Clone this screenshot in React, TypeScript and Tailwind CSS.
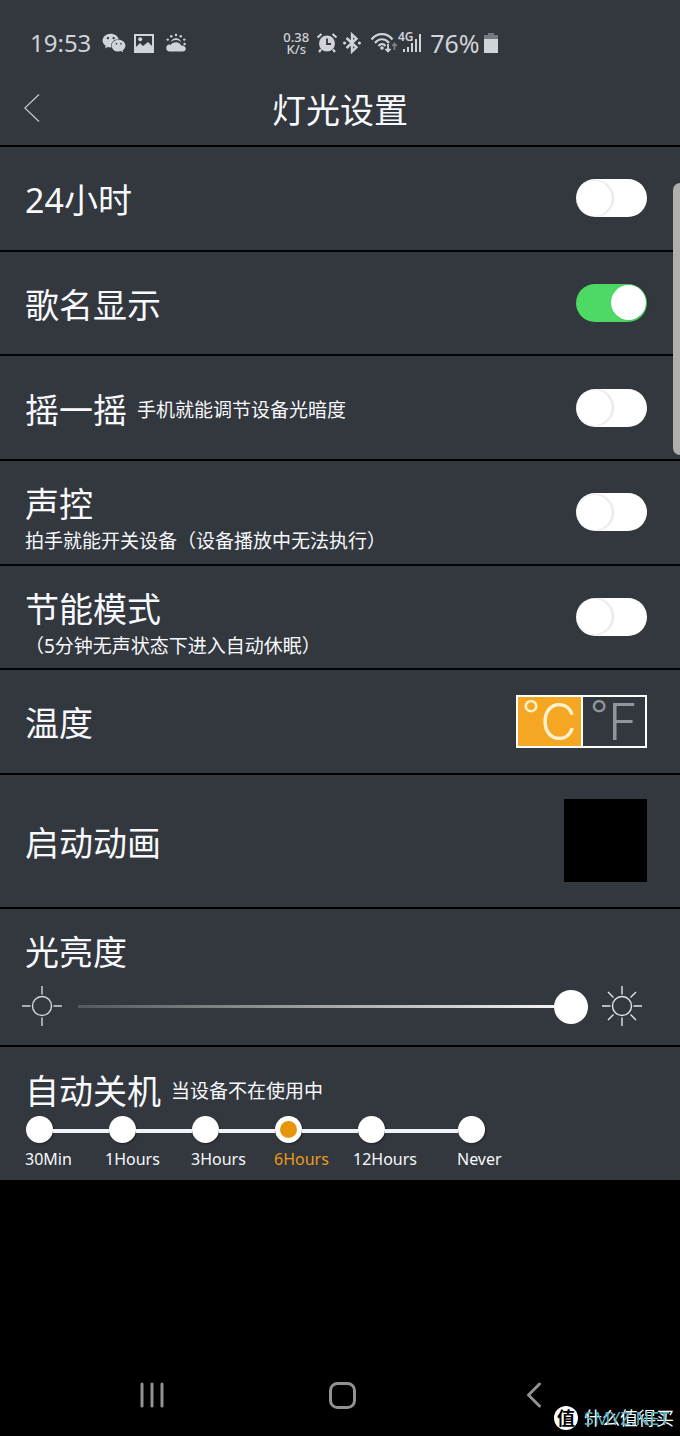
import { useState, type ReactNode } from 'react';
import { FaWeixin } from 'react-icons/fa';

interface ToggleRowProps {
  id: string;
  title: string;
  note?: string;
  stacked?: boolean;
  defaultChecked?: boolean;
}

const toggles: ToggleRowProps[] = [
  { id: 'hour24', title: '24小时' },
  { id: 'songName', title: '歌名显示', defaultChecked: true },
  { id: 'shake', title: '摇一摇', note: '手机就能调节设备光暗度' },
  { id: 'voice', title: '声控', note: '拍手就能开关设备（设备播放中无法执行）', stacked: true },
  { id: 'saving', title: '节能模式', note: '（5分钟无声状态下进入自动休眠）', stacked: true },
];

const timers = [
  { id: '30min', label: '30Min', dotWidth: 'w-[83px]', labelWidth: 'w-[80px]' },
  { id: '1h', label: '1Hours', dotWidth: 'w-[83px]', labelWidth: 'w-[86px]' },
  { id: '3h', label: '3Hours', dotWidth: 'w-[83px]', labelWidth: 'w-[83px]' },
  { id: '6h', label: '6Hours', dotWidth: 'w-[83px]', labelWidth: 'w-[79px]' },
  { id: '12h', label: '12Hours', dotWidth: 'w-[100px]', labelWidth: 'w-[104px]' },
  { id: 'never', label: 'Never', dotWidth: 'w-[27px]', labelWidth: 'w-[46px]' },
];

function StatusBar() {
  return (
    <div className="flex h-[86px] items-center pl-[30px] text-2xl leading-6 text-[#d0d3d8]">
      <span>19:53</span>
      <FaWeixin className="ml-[11px] h-[22px] w-6" />
      <svg viewBox="0 0 20 19" className="ml-2 h-[19px] w-5" fill="currentColor">
        <path fillRule="evenodd" d="M0 0h20v19H0zM2 2v11l4-4 3 3 5-4 4 4V2z" />
        <circle cx="6.2" cy="5.2" r="2" />
      </svg>
      <svg viewBox="0 0 22 20" className="ml-[11px] h-5 w-[22px]" fill="currentColor">
        <path d="M4 18.5a3.6 3.6 0 0 1 0-7c.8 0 1.3.1 1.8.4C6.8 10 8.5 9.2 11 9.2c2.7 0 4.5 1.3 5.2 3.3 2.6-.4 4.6 1 4.6 3.1 0 1.8-1.3 2.9-3 2.9z" />
        <path d="M5.5 9.5C6.3 6.8 8.3 5.2 11 5.2s4.8 1.7 5.5 4.6c-1.6-2-3.3-2.7-5.5-2.7s-4 .8-5.5 2.4z" />
        <circle cx="11" cy="2" r="1.2" />
        <circle cx="6.2" cy="3.3" r="1.2" />
        <circle cx="15.8" cy="3.3" r="1.2" />
        <circle cx="2.7" cy="6.6" r="1.2" />
        <circle cx="19.3" cy="6.6" r="1.2" />
        <circle cx="19.6" cy="11" r="1.2" />
      </svg>

      <span className="ml-24 flex flex-col items-center text-[13px] leading-3 font-medium">
        <span>0.38</span>
        <span>K/s</span>
      </span>
      <svg viewBox="0 0 22 22" className="ml-[7px] h-[22px] w-[22px]" fill="none" stroke="currentColor">
        <circle cx="11" cy="11.5" r="8" fill="currentColor" stroke="none" />
        <path d="M1.5 5.5 5.5 2M20.5 5.5 16.5 2M5 17.5l-2 2.5M17 17.5l2 2.5" strokeWidth="2.2" />
        <path d="M11 6.5V12h4" stroke="#33373e" strokeWidth="1.8" />
      </svg>
      <svg viewBox="0 0 18 22" className="ml-[5px] h-[22px] w-[18px]" fill="none" stroke="currentColor" strokeWidth="2.4">
        <path d="M3.5 6 13.5 15.3 9 19.5V2.5L13.5 6.7 3.5 16" />
        <circle cx="1.6" cy="11" r="1.6" fill="currentColor" stroke="none" />
        <circle cx="16.4" cy="11" r="1.6" fill="currentColor" stroke="none" />
      </svg>
      <svg viewBox="0 0 28 22" className="ml-[9px] h-[22px] w-7" fill="none" stroke="currentColor" strokeWidth="2.2">
        <path d="M1.5 7.5C7 .2 17 .2 22.5 7.5M5 11c4-5 10-5 14 0M8.5 14c2-2.5 5-2.5 7 0" />
        <circle cx="12" cy="16" r="1.8" fill="currentColor" stroke="none" />
        <path d="M18 12v7M15.5 16.8l2.5 2.6 2.5-2.6" strokeWidth="1.8" />
        <path d="M24.500 18v-6M22.300 14l2.200-2.500 2.200 2.500" stroke="#80848a" strokeWidth="1.6" />
      </svg>
      <svg viewBox="0 0 24 24" className="h-6 w-6 overflow-visible" fill="currentColor">
        <text x="0" y="10" fontSize="12" fontWeight="600">4G</text>
        <path d="M5 18h2v3H5zM9 16h2v5H9zM13 12h2v9h-2zM17 8h2v13h-2zM21 3h2v18h-2z" />
      </svg>
      <span className="ml-2 text-[25px]">76%</span>
      <svg viewBox="0 0 14 20" className="ml-1 h-5 w-[14px]" fill="currentColor">
        <path d="M4 0h6v2h4v4H0V2h4z" fill="#777b81" />
        <path d="M0 6h14v14H0z" />
      </svg>
    </div>
  );
}

function Title({ children }: { children: ReactNode }) {
  return <span className="text-[34px] leading-10">{children}</span>;
}

function ToggleRow({ id, title, note, stacked, defaultChecked }: ToggleRowProps) {
  return (
    <div className="flex items-center justify-between border-t-2 border-black pr-[33px] pl-[25px]">
      <label htmlFor={id} className={stacked ? 'flex flex-col pt-[18px]' : 'flex items-center gap-2.5 pt-1'}>
        <Title>{title}</Title>
        {note && <span className="text-[19px] leading-[34px]">{note}</span>}
      </label>
      <input
        id={id}
        type="checkbox"
        role="switch"
        defaultChecked={defaultChecked}
        className="flex h-[38px] w-[71px] shrink-0 appearance-none items-center rounded-full bg-white px-px transition-colors before:h-[35px] before:w-[35px] before:rounded-full before:bg-white before:shadow-[1px_0_3px_rgba(0,0,0,0.18)] checked:justify-end checked:bg-[#4cd964]"
      />
    </div>
  );
}

function TemperatureRow() {
  const [unit, setUnit] = useState('C');

  return (
    <div className="flex items-center justify-between border-t-2 border-black pr-[33px] pl-[25px]">
      <span className="pt-0.5">
        <Title>温度</Title>
      </span>
      <div className="flex h-[53px] w-[131px] divide-x-2 divide-white border-2 border-white">
        {['C', 'F'].map((u) => (
          <button
            key={u}
            onClick={() => setUnit(u)}
            aria-pressed={unit === u}
            className={`flex flex-1 items-start justify-center font-['Inter'] font-light ${
              unit === u ? 'bg-[#f5a623] text-[#fff3cf]' : 'text-[#92969c]'
            }`}
          >
            <span className="text-[40px] leading-9">°</span>
            <span className="text-[50px] leading-[51px]">{u}</span>
          </button>
        ))}
      </div>
    </div>
  );
}

function BrightnessRow() {
  return (
    <div className="border-t-2 border-black pt-[23px] pb-[19px]">
      <label htmlFor="brightness" className="block pl-[25px]">
        <Title>光亮度</Title>
      </label>
      <div className="mt-3.5 flex items-center pr-[38px] pl-[22px]">
        <svg viewBox="0 0 40 40" className="h-10 w-10 shrink-0" fill="none" stroke="#d4d6d9" strokeWidth="1.4">
          <circle cx="20" cy="20" r="9.5" />
          <path d="M20 0v8.5M20 31.5V40M0 20h8.5M31.5 20H40" />
        </svg>
        <input
          id="brightness"
          type="range"
          defaultValue={100}
          className="mr-3.5 ml-4 h-[34px] min-w-0 flex-1 appearance-none bg-transparent [&::-webkit-slider-runnable-track]:h-[3px] [&::-webkit-slider-runnable-track]:bg-linear-to-r [&::-webkit-slider-runnable-track]:from-[#55595d] [&::-webkit-slider-runnable-track]:to-white [&::-webkit-slider-thumb]:-mt-[15px] [&::-webkit-slider-thumb]:h-[34px] [&::-webkit-slider-thumb]:w-[34px] [&::-webkit-slider-thumb]:appearance-none [&::-webkit-slider-thumb]:rounded-full [&::-webkit-slider-thumb]:bg-white"
        />
        <svg viewBox="0 0 40 40" className="h-10 w-10 shrink-0" fill="none" stroke="#e4e6e9" strokeWidth="1.4">
          <circle cx="20" cy="20" r="9.5" />
          <path d="M20 0v8.5M20 31.5V40M0 20h8.5M31.5 20H40M6 6l5.5 5.5M28.5 28.5 34 34M34 6l-5.5 5.5M11.5 28.5 6 34" />
        </svg>
      </div>
    </div>
  );
}

function TimerRow() {
  const [selected, setSelected] = useState('6h');

  return (
    <div className="border-t-2 border-black pt-6 pb-[9px]">
      <div className="flex items-center gap-2.5 pl-[25px]">
        <Title>自动关机</Title>
        <span className="text-[19px] leading-8">当设备不在使用中</span>
      </div>
      <div className="mt-[5px] flex pl-[26px]">
        {timers.map((t) => (
          <div key={t.id} className={`flex items-center ${t.dotWidth}`}>
            <input
              id={t.id}
              type="radio"
              name="timer"
              checked={selected === t.id}
              onChange={() => setSelected(t.id)}
              className="flex h-[27px] w-[27px] shrink-0 appearance-none items-center justify-center rounded-full bg-white shadow-[1px_1px_2px_rgba(0,0,0,0.4)] checked:before:h-[17px] checked:before:w-[17px] checked:before:rounded-full checked:before:bg-[#e8940c]"
            />
            <span className="mt-0.5 h-1 flex-1 bg-[#f0f3f8]" />
          </div>
        ))}
      </div>
      <div className="mt-1 flex pl-[25px] text-base leading-6">
        {timers.map((t) => (
          <div key={t.id} className={t.labelWidth}>
            <label htmlFor={t.id} className={selected === t.id ? 'text-[#ed9a1c]' : ''}>
              {t.label}
            </label>
          </div>
        ))}
      </div>
    </div>
  );
}

function NavBar() {
  return (
    <nav className="mt-auto grid h-[82px] grid-cols-3 items-center justify-items-center pr-[51px] pl-[57px] text-[#929292]">
      <button aria-label="最近">
        <svg viewBox="0 0 24 26" className="h-[26px] w-6" fill="none" stroke="currentColor" strokeWidth="3" strokeLinecap="round">
          <path d="M2 2v22M12 2v22M22 2v22" />
        </svg>
      </button>
      <button aria-label="主屏幕">
        <svg viewBox="0 0 27 27" className="h-[27px] w-[27px]" fill="none" stroke="currentColor" strokeWidth="3">
          <rect x="1.5" y="1.5" width="24" height="24" rx="7" />
        </svg>
      </button>
      <button aria-label="返回">
        <svg viewBox="0 0 16 26" className="h-[26px] w-4" fill="none" stroke="currentColor" strokeWidth="3" strokeLinecap="round" strokeLinejoin="round">
          <path d="M13.5 2 2.5 13l11 11" />
        </svg>
      </button>
    </nav>
  );
}

export default function App() {
  return (
    <div className="relative flex min-h-screen flex-col overflow-hidden bg-black font-['Noto_Sans','Noto_Sans_CJK_SC',sans-serif] text-[#f7f9fc]">
      <main className="bg-[#33373e]">
        <StatusBar />

        {/* Header */}
        <header className="grid h-[59px] grid-cols-[40px_1fr_40px] items-start">
          <button aria-label="后退" className="justify-self-end pt-2">
            <svg viewBox="0 0 16 28" className="h-7 w-4" fill="none" stroke="#c8cbd0" strokeWidth="1.2">
              <path d="M15 .5.8 14 15 27.5" />
            </svg>
          </button>
          <h1 className="text-center text-[34px] leading-[48px]">灯光设置</h1>
        </header>

        <div className="grid min-h-[628px] auto-rows-fr">
          {toggles.map((t) => (
            <ToggleRow key={t.id} {...t} />
          ))}
          <TemperatureRow />
        </div>

        {/* Startup animation */}
        <div className="flex items-center justify-between border-t-2 border-black pt-6 pr-[33px] pb-[25px] pl-[25px]">
          <span className="pt-1">
            <Title>启动动画</Title>
          </span>
          <button aria-label="启动动画" className="h-[83px] w-[83px] bg-black" />
        </div>

        <BrightnessRow />
        <TimerRow />
      </main>

      <NavBar />

      {/* Edge panel handle */}
      <div className="absolute top-[183px] right-0 h-[272px] w-[7px] rounded-l-lg bg-[#b1afab]" />

      {/* Watermark */}
      <div className="absolute right-1.5 bottom-1.5 flex items-center gap-1.5">
        <span className="flex h-6 w-6 items-center justify-center rounded-full bg-white text-lg leading-6 font-bold text-black">值</span>
        <span className="relative text-lg leading-6 text-white">
          什么值得买
          <span className="absolute top-0 left-0 text-[#5fb3c4]">SMYZ.NET</span>
        </span>
      </div>
    </div>
  );
}
